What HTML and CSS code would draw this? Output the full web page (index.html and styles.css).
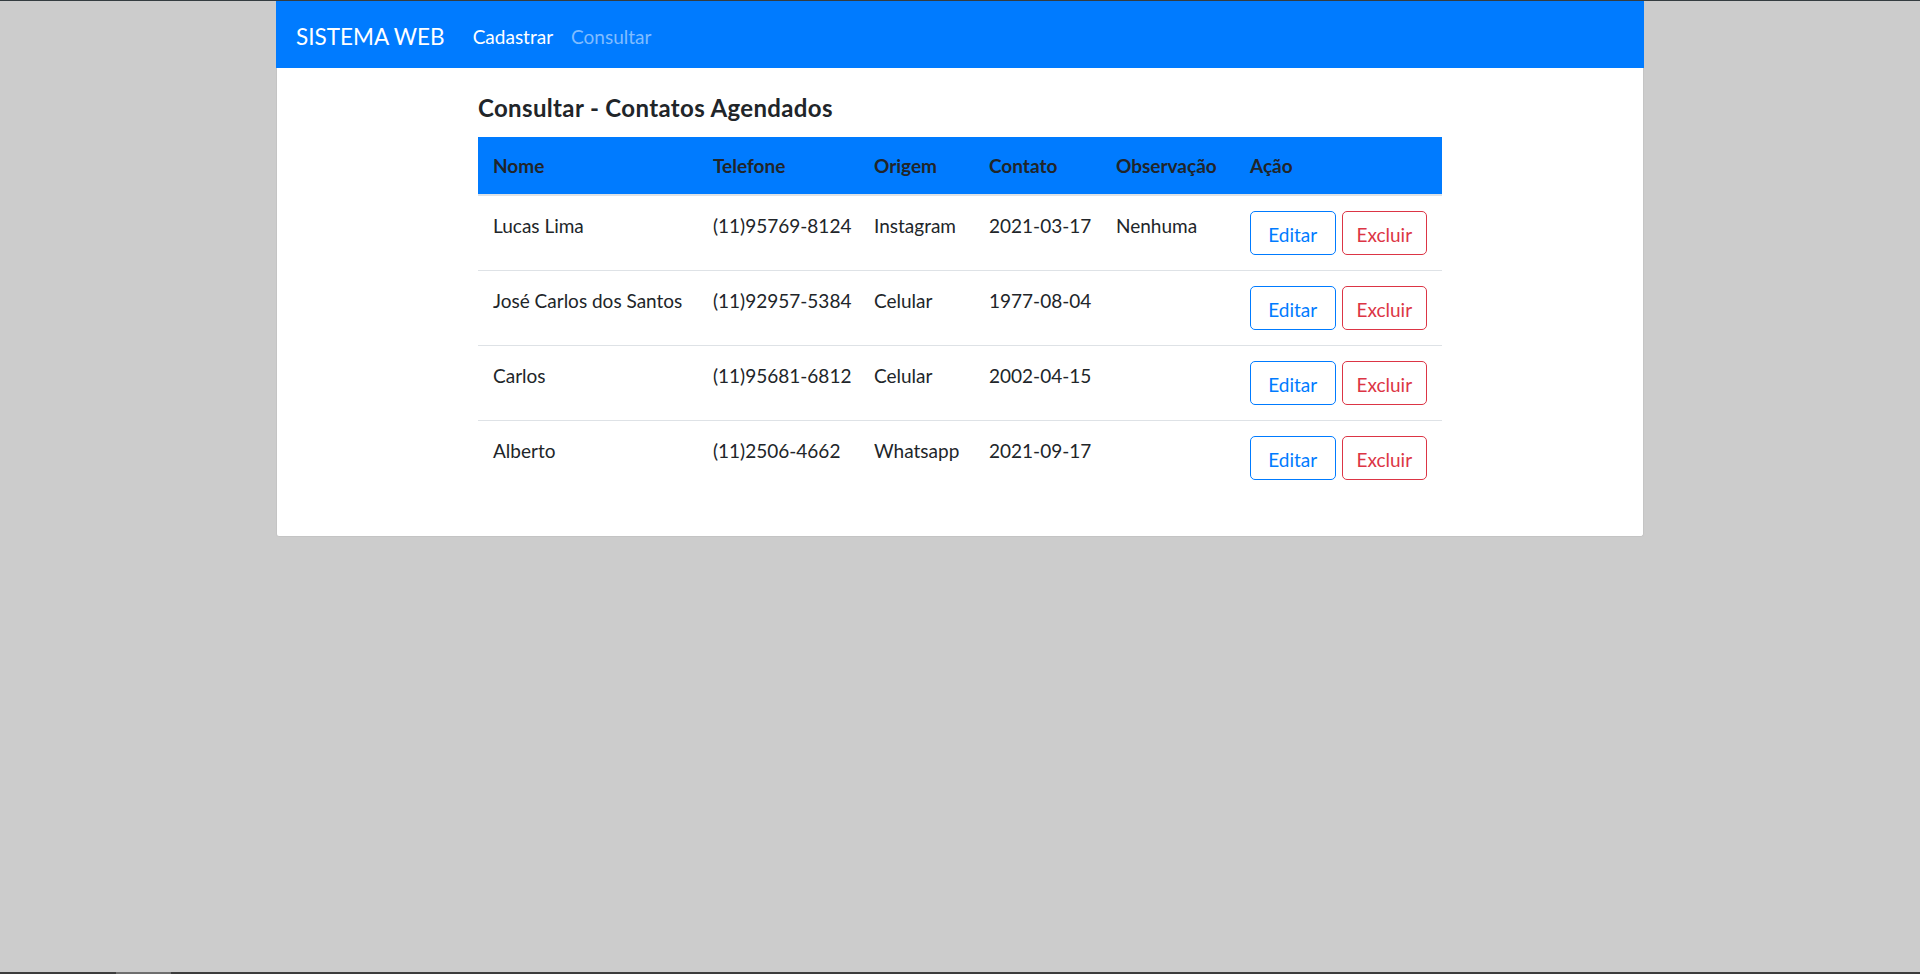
FILE: index.html
```html
<!DOCTYPE html>
<html lang="pt-BR">
<head>
<meta charset="utf-8">
<title>SISTEMA WEB - Consultar</title>
<link rel="stylesheet" href="styles.css">
</head>
<body>
<div class="page">
  <nav class="navbar">
    <span class="brand">SISTEMA WEB</span>
    <a class="nav-link active" href="#">Cadastrar</a>
    <a class="nav-link muted" href="#">Consultar</a>
  </nav>
  <main class="card">
    <div class="content">
      <h1 class="title">Consultar - Contatos Agendados</h1>
      <table class="table">
        <thead>
          <tr>
            <th class="c-nome">Nome</th>
            <th class="c-tel">Telefone</th>
            <th class="c-orig">Origem</th>
            <th class="c-cont">Contato</th>
            <th class="c-obs">Observação</th>
            <th class="c-acao">Ação</th>
          </tr>
        </thead>
        <tbody>
          <tr>
            <td>Lucas Lima</td>
            <td>(11)95769-8124</td>
            <td>Instagram</td>
            <td>2021-03-17</td>
            <td>Nenhuma</td>
            <td><div class="actions"><button class="btn btn-blue">Editar</button><button class="btn btn-red">Excluir</button></div></td>
          </tr>
          <tr>
            <td>José Carlos dos Santos</td>
            <td>(11)92957-5384</td>
            <td>Celular</td>
            <td>1977-08-04</td>
            <td></td>
            <td><div class="actions"><button class="btn btn-blue">Editar</button><button class="btn btn-red">Excluir</button></div></td>
          </tr>
          <tr>
            <td>Carlos</td>
            <td>(11)95681-6812</td>
            <td>Celular</td>
            <td>2002-04-15</td>
            <td></td>
            <td><div class="actions"><button class="btn btn-blue">Editar</button><button class="btn btn-red">Excluir</button></div></td>
          </tr>
          <tr>
            <td>Alberto</td>
            <td>(11)2506-4662</td>
            <td>Whatsapp</td>
            <td>2021-09-17</td>
            <td></td>
            <td><div class="actions"><button class="btn btn-blue">Editar</button><button class="btn btn-red">Excluir</button></div></td>
          </tr>
        </tbody>
      </table>
    </div>
  </main>
</div>
<div class="screen-bar"><span class="screen-thumb"></span></div>
</body>
</html>
```

FILE: styles.css
```css
* { box-sizing: border-box; }

html, body {
  margin: 0;
  padding: 0;
}

body {
  background: #cccccc;
  border-top: 1px solid #343c40;
  font-family: "Lato", "Liberation Sans", sans-serif;
  color: #212529;
}

.page {
  width: 1368px;
  margin: 0 auto;
}

.navbar {
  height: 67px;
  background: #007bff;
  display: flex;
  align-items: center;
  padding: 0 0 0 20px;
}

.brand {
  color: #ffffff;
  font-size: 22.5px;
  line-height: 30px;
  margin-right: 28px;
  padding-top: 4px;
}

.nav-link {
  font-size: 19px;
  line-height: 28px;
  text-decoration: none;
  margin-right: 18px;
  padding-top: 4px;
}

.nav-link.active { color: #ffffff; }
.nav-link.muted { color: #80bdff; }

.card {
  background: #ffffff;
  width: 1368px;
  height: 469px;
  border: 1px solid #c4c4c4;
  border-top: none;
  border-radius: 0 0 3px 3px;
}

.content {
  width: 964px;
  margin: 0 auto;
  padding-top: 26px;
}

.title {
  margin: 0 0 15px 0;
  font-size: 24px;
  line-height: 28px;
  font-weight: 700;
  letter-spacing: 0.35px;
  color: #212529;
}

.table {
  width: 964px;
  border-collapse: collapse;
  table-layout: fixed;
}

.table th {
  background: #007bff;
  text-align: left;
  font-weight: 700;
  font-size: 19px;
  line-height: 29px;
  padding: 14px 15px;
  border-bottom: 2px solid #dee2e6;
}

.c-nome { width: 220px; }
.c-tel { width: 161px; }
.c-orig { width: 115px; }
.c-cont { width: 127px; }
.c-obs { width: 134px; }
.c-acao { width: 207px; }

.table td {
  vertical-align: top;
  font-size: 19px;
  line-height: 30px;
  padding: 15px;
  border-top: 1px solid #dee2e6;
  white-space: nowrap;
}

.table tbody tr:first-child td { border-top: none; }

.actions {
  display: flex;
  gap: 6px;
}

.btn {
  width: 86px;
  height: 44px;
  background: #ffffff;
  border: 1px solid;
  border-radius: 5px;
  font-family: inherit;
  font-size: 19px;
  line-height: 28px;
  padding: 4px 0 0 0;
  cursor: pointer;
}

.btn-blue { color: #007bff; border-color: #007bff; }
.btn-red { color: #dc3545; border-color: #dc3545; }

.screen-bar {
  position: fixed;
  left: 0;
  right: 0;
  bottom: 0;
  height: 2px;
  background: #3c3c3c;
}

.screen-thumb {
  display: block;
  margin-left: 116px;
  width: 55px;
  height: 2px;
  background: #6e6e6e;
}
```
